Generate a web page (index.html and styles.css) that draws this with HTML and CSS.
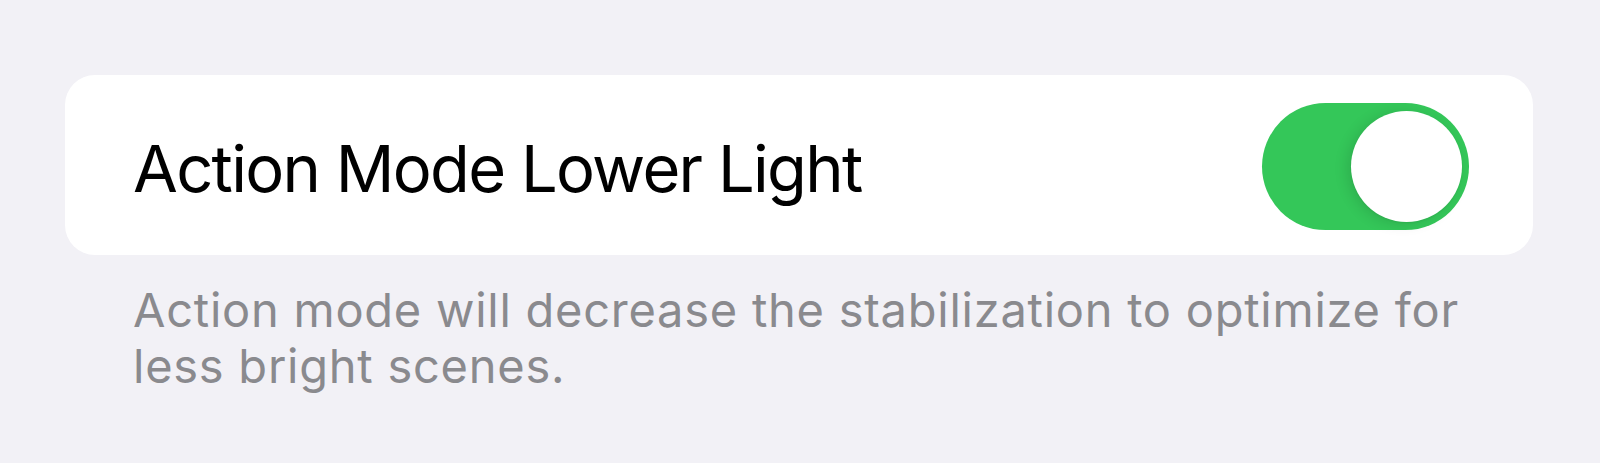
FILE: index.html
```html
<!DOCTYPE html>
<html lang="en">
<head>
<meta charset="utf-8">
<title>Action Mode</title>
<link rel="stylesheet" href="styles.css">
</head>
<body>
  <main class="settings">
    <section class="group">
      <div class="row">
        <span class="row-label">Action Mode Lower Light</span>
        <div class="switch is-on" role="switch" aria-checked="true">
          <span class="switch-knob"></span>
        </div>
      </div>
    </section>
    <p class="group-footer">Action mode will decrease the stabilization to optimize for less bright scenes.</p>
  </main>
</body>
</html>
```
FILE: styles.css
```css
* {
  box-sizing: border-box;
}

html, body {
  margin: 0;
  padding: 0;
}

body {
  background: #f2f1f6;
  font-family: Inter, "Noto Sans", "Liberation Sans", sans-serif;
  -webkit-font-smoothing: antialiased;
}

.settings {
  padding: 75px 67px 0 65px;
}

.group {
  background: #ffffff;
  border-radius: 30px;
}

.row {
  height: 180px;
  display: flex;
  align-items: center;
  justify-content: space-between;
  padding: 0 64px 0 68px;
}

.row-label {
  font-size: 65px;
  color: #000000;
  padding-top: 6px;
  letter-spacing: -1.7px;
}

.switch {
  position: relative;
  width: 207px;
  height: 127px;
  border-radius: 64px;
  background: #34c759;
  display: flex;
  align-items: center;
  justify-content: flex-end;
  padding-right: 7px;
  margin-top: 3px;
}

.switch-knob {
  width: 111px;
  height: 111px;
  border-radius: 50%;
  background: #ffffff;
  box-shadow: -4px 2px 14px rgba(0, 0, 0, 0.12), 0 1px 2px rgba(0, 0, 0, 0.06);
}

.group-footer {
  margin: 27px 0 0;
  padding-left: 68px;
  font-size: 47px;
  line-height: 56px;
  color: #8a8a8e;
  letter-spacing: 0.75px;
  max-width: 1440px;
}
```
